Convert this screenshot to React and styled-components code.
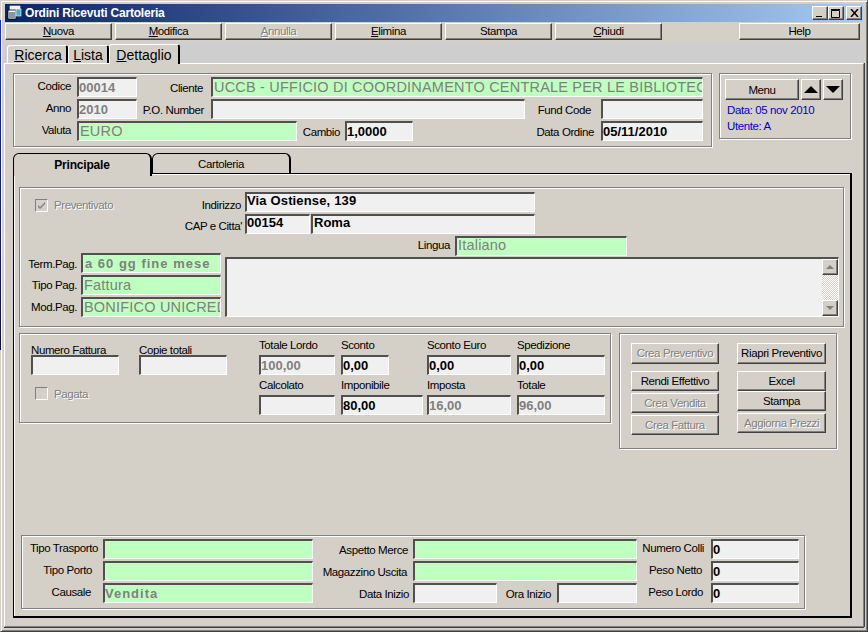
import React from 'react';
import styled, { createGlobalStyle, css } from 'styled-components';

const GlobalStyle = createGlobalStyle`
  html, body {
    margin: 0;
    padding: 0;
    background: #d4d0c8;
    overflow: hidden;
  }
  * { box-sizing: border-box; }
`;

const raised = css`
  border: 1px solid;
  border-color: #fff #404040 #404040 #fff;
  box-shadow: inset -1px -1px 0 #808080;
`;

const etched = css`
  border: 1px solid #808080;
  box-shadow: 1px 1px 0 #fff, inset 1px 1px 0 #fff;
`;

// Arial dei form originali e' piu' stretto, si recupera con la spaziatura
const uiText = css`
  font-family: "Liberation Sans", Arial, sans-serif;
  font-size: 11.5px;
  letter-spacing: -0.4px;
`;

const Window = styled.div`
  ${uiText};
  position: relative;
  width: 868px;
  height: 632px;
  padding: 4px;
  background: #d4d0c8;
  color: #000;
  border: 1px solid;
  border-color: #d4d0c8 #404040 #404040 #d4d0c8;
  box-shadow: inset 1px 1px 0 #fff, inset -1px -1px 0 #808080;
  display: flex;
  flex-direction: column;

  &::before {
    content: '';
    position: absolute;
    left: -1px;
    top: 19px;
    width: 1px;
    height: 330px;
    background: linear-gradient(180deg, #1a2fd0, #101040);
  }
`;

const TitleBar = styled.div`
  height: 18px;
  margin: -1px 0 0 0;
  padding: 0 1px 0 2px;
  display: flex;
  align-items: center;
  background: linear-gradient(90deg, #0a246a, #a6caf0);
  color: #fff;
  font: bold 12px "Liberation Sans", Arial, sans-serif;
  letter-spacing: -0.2px;
`;

const TitleText = styled.span`
  margin-left: 2px;
  flex: 1;
`;

const WinButton = styled.button`
  ${raised};
  width: 16px;
  height: 14px;
  margin-left: ${(p) => (p.$gap ? '2px' : '0')};
  padding: 0;
  background: #d4d0c8;
  display: flex;
  align-items: center;
  justify-content: center;
`;

const Toolbar = styled.div`
  display: flex;
  gap: 3px;
  height: 17px;
  margin-top: 1px;
`;

const BaseButton = styled.button`
  ${raised};
  ${uiText};
  background: #d4d0c8;
  padding: 0;
  white-space: nowrap;
  color: ${(p) => (p.disabled ? '#808080' : '#000')};
  text-shadow: ${(p) => (p.disabled ? '1px 1px 0 #fff' : 'none')};
`;

const ToolButton = styled(BaseButton)`
  width: ${(p) => p.$w || 107}px;
  height: 17px;
  line-height: 14px;
  padding-bottom: 2px;
  margin-left: ${(p) => p.$left || 0}px;
`;

const Key = styled.span`
  text-decoration: underline;
`;

const TabStrip = styled.div`
  height: 20px;
  margin: 3px -1px 0 -1px;
  padding-left: 3px;
  display: flex;
  align-items: flex-end;
  background: #cecece;
`;

const PageTab = styled.div`
  width: ${(p) => p.$w}px;
  height: ${(p) => (p.$active ? 20 : 18)}px;
  padding-top: ${(p) => (p.$active ? 2 : 1)}px;
  padding-left: ${(p) => p.$pl || 0}px;
  text-align: center;
  font-size: 14px;
  letter-spacing: 0;
  line-height: 16px;
  background: #d4d0c8;
  border-top: 1px solid #fff;
  border-left: 1px solid #fff;
  border-right: 2px solid #000;
  border-radius: 3px 3px 0 0;
  margin-bottom: ${(p) => (p.$active ? -1 : 0)}px;
  position: relative;
`;

const PagePanel = styled.div`
  flex: 1;
  margin: 0 -1px;
  border-top: 1px solid #fff;
  border-left: 1px solid #fff;
  border-right: 1px solid #808080;
  border-bottom: 1px solid #808080;
  box-shadow: 1px 0 0 #404040, 0 1px 0 #404040;
  padding: 9px 0 0 8px;
  display: flex;
  flex-direction: column;
`;

const TopRow = styled.div`
  display: flex;
  gap: 7px;
  align-items: flex-start;
`;

const Group = styled.div`
  ${etched};
  width: ${(p) => p.$w}px;
  height: ${(p) => p.$h}px;
  background: #d4d0c8;
  flex: none;
`;

const HeaderGroup = styled(Group)`
  padding: 3px 0 0 8px;
  display: grid;
  grid-template-columns: 55px 60px 74px 314px 76px 102px;
  grid-auto-rows: 20px;
  row-gap: 2px;
`;

const Label = styled.label`
  align-self: center;
  white-space: nowrap;
  flex: none;
  width: ${(p) => (p.$w ? `${p.$w}px` : 'auto')};
  padding-right: ${(p) => p.$pr ?? 0}px;
  text-align: right;
  margin-top: ${(p) => p.$top ?? 2}px;
  grid-column: ${(p) => p.$col || 'auto'};
`;

const Field = styled.div`
  height: 20px;
  width: ${(p) => (p.$w ? `${p.$w}px` : 'auto')};
  flex: none;
  padding: ${(p) => (p.$high || p.$big ? 0 : 1)}px 0 0 ${(p) => (p.$big ? 1 : p.$pad || 0)}px;
  margin-left: ${(p) => p.$ml || 0}px;
  border: 2px solid;
  border-color: #505050 #fff #fff #505050;
  border-right-width: 1px;
  border-bottom-width: 1px;
  overflow: hidden;
  white-space: nowrap;
  background: ${(p) => (p.$lookup ? '#bfffbf' : '#f0f0f0')};
  color: ${(p) => (p.$dim ? '#808080' : '#000')};
  font-family: "Liberation Sans", Arial, sans-serif;
  font-size: ${(p) => (p.$big ? 14.5 : 13)}px;
  font-weight: ${(p) => (p.$big ? 400 : 700)};
  line-height: ${(p) => (p.$high ? 14 : 16)}px;
  letter-spacing: ${(p) => (p.$big ? 0.2 : p.$track || 0)}px;
  grid-column: ${(p) => p.$col || 'auto'};
`;

const InlineRow = styled.div`
  display: flex;
  align-items: center;
  grid-column: ${(p) => p.$col || 'auto'};
`;

const MenuGroup = styled(Group)`
  padding: 5px 0 0 5px;
`;

const MenuButtons = styled.div`
  display: flex;
  gap: 2px;
`;

const MenuButton = styled(BaseButton)`
  width: ${(p) => p.$w}px;
  height: 21px;
  display: flex;
  align-items: center;
  justify-content: center;
`;

const Info = styled.div`
  color: #0000c8;
  line-height: 16px;
  margin-left: 2px;
  margin-top: ${(p) => p.$top || 0}px;
`;

const InnerTabs = styled.div`
  display: flex;
  margin-top: 6px;
  height: 21px;
  position: relative;
  z-index: 1;
`;

const InnerTab = styled.div`
  width: 139px;
  height: ${(p) => (p.$active ? 23 : 21)}px;
  background: #d4d0c8;
  border: 1px solid #000;
  border-right-width: 2px;
  border-bottom: ${(p) => (p.$active ? 'none' : '1px solid #000')};
  border-radius: 6px 6px 0 0;
  text-align: center;
  font-weight: ${(p) => (p.$active ? 700 : 400)};
  font-size: ${(p) => (p.$active ? 12 : 11.5)}px;
  letter-spacing: ${(p) => (p.$active ? -0.2 : -0.4)}px;
  line-height: ${(p) => (p.$active ? 22 : 20)}px;
`;

const InnerPanel = styled.div`
  width: 839px;
  height: 445px;
  margin-top: -1px;
  border: 1px solid #000;
  border-right-width: 2px;
  border-bottom-width: 2px;
  box-shadow: inset 1px 1px 0 #fff;
  padding: 13px 0 0 5px;
  display: flex;
  flex-direction: column;
`;

const AddressGroup = styled(Group)`
  padding: 4px 0 0 0;
  display: flex;
  flex-direction: column;
`;

const AddressRow = styled.div`
  display: flex;
  align-items: center;
  height: 20px;
  margin-bottom: 2px;
  padding-left: ${(p) => p.$left || 0}px;
`;

const CheckLabel = styled.div`
  display: flex;
  align-items: center;
  flex: none;
  gap: 6px;
  color: #808080;
  text-shadow: 1px 1px 0 #fff;
  width: ${(p) => (p.$w ? `${p.$w}px` : 'auto')};
  margin: ${(p) => p.$top || 0}px 0 0 ${(p) => p.$left || 0}px;
`;

const CheckBox = styled.span`
  width: 13px;
  height: 13px;
  flex: none;
  display: flex;
  border: 1px solid;
  border-color: #808080 #fff #fff #808080;
  background: #d4d0c8;
`;

const PayBlock = styled.div`
  display: flex;
  gap: 4px;
  margin-top: -5px;
`;

const PayColumn = styled.div`
  display: grid;
  grid-template-columns: 57px 140px;
  grid-auto-rows: 20px;
  row-gap: 2px;
  padding-left: 4px;
`;

const NotesBox = styled.div`
  width: 614px;
  height: 60px;
  margin-top: 4px;
  display: flex;
  justify-content: flex-end;
  background: #f0f0f0;
  border: 2px solid;
  border-color: #505050 #fff #fff #505050;
  border-right-width: 1px;
  border-bottom-width: 1px;
`;

const ScrollTrack = styled.div`
  width: 16px;
  display: flex;
  flex-direction: column;
  justify-content: space-between;
  background: repeating-conic-gradient(#fff 0 25%, #d4d0c8 0 50%) 0 0 / 2px 2px;
`;

const ScrollBtn = styled.div`
  ${raised};
  width: 16px;
  height: 16px;
  background: #d4d0c8;
  display: flex;
  align-items: center;
  justify-content: center;
`;

const MiddleRow = styled.div`
  display: flex;
  gap: 8px;
  margin-top: 6px;
  align-items: flex-start;
`;

const TotalsGroup = styled(Group)`
  display: flex;
`;

const InvoiceColumn = styled.div`
  width: ${(p) => p.$w}px;
  padding: 7px 0 0 ${(p) => p.$left || 0}px;
  display: flex;
  flex-direction: column;
`;

const Caption = styled.div`
  height: 14px;
  line-height: ${(p) => (p.$low ? 18 : 14)}px;
  white-space: nowrap;
`;

const TotalsGrid = styled.div`
  display: grid;
  grid-template-columns: 82px 86px 90px 88px;
  grid-template-rows: 14px 20px 14px 20px;
  margin-top: 4px;
  row-gap: 3px;
`;

const ActionsGroup = styled(Group)`
  padding: 9px 0 0 11px;
  display: flex;
  gap: 18px;
`;

const ActionColumn = styled.div`
  width: ${(p) => p.$w}px;
  display: flex;
  flex-direction: column;
`;

const ActionButton = styled(BaseButton)`
  width: 100%;
  height: ${(p) => p.$h || 20}px;
  padding-bottom: ${(p) => (p.$h ? 2 : 0)}px;
  margin-top: ${(p) => p.$top || 0}px;
  flex: none;
`;

const Spacer = styled.div`
  flex: 1;
`;

const ShippingGroup = styled(Group)`
  margin: 0 0 7px 2px;
  padding: 3px 0 0 0;
  display: grid;
  grid-template-columns: 81px 210px 100px 224px 74px 88px;
  grid-auto-rows: 20px;
  row-gap: 2px;
`;

const check = (
  <svg width="11" height="11" viewBox="0 0 11 11">
    <path d="M2 5l2 2 5-5v2l-5 5-2-2z" fill="#808080" />
  </svg>
);

const arrow = (up, size, color) => (
  <svg width={size * 2} height={size} viewBox="0 0 14 7">
    <path d={up ? 'M7 0l7 7H0z' : 'M0 0h14L7 7z'} fill={color} />
  </svg>
);

const AppIcon = () => (
  <svg width="16" height="16" viewBox="0 0 16 16">
    <rect x="3" y="1" width="10" height="4" fill="#e8f4f8" stroke="#fff" strokeWidth="0.6" />
    <rect x="1" y="5" width="8" height="9" fill="#fff" stroke="#000" strokeWidth="0.8" />
    <rect x="9" y="4" width="5" height="7" fill="#4ab0c8" stroke="#fff" strokeWidth="0.6" />
    <path d="M2 8h6M2 10h6M2 12h6" stroke="#0a3060" />
  </svg>
);

function Check({ checked, label, w, top, left }) {
  return (
    <CheckLabel $w={w} $top={top} $left={left}>
      <CheckBox>{checked && check}</CheckBox>
      {label}
    </CheckLabel>
  );
}

export default function App() {
  return (
    <>
      <GlobalStyle />
      <Window>
        <TitleBar>
          <AppIcon />
          <TitleText>Ordini Ricevuti Cartoleria</TitleText>
          <WinButton>
            <svg width="8" height="8" viewBox="0 0 8 8"><path d="M0 7h6v1H0z" fill="#000" /></svg>
          </WinButton>
          <WinButton>
            <svg width="10" height="9" viewBox="0 0 10 9"><path d="M.5 1.5h8v7h-8zM0 .5h9" fill="none" stroke="#000" /></svg>
          </WinButton>
          <WinButton $gap>
            <svg width="9" height="8" viewBox="0 0 9 8"><path d="M1 0l7 8M8 0L1 8" stroke="#000" strokeWidth="1.5" /></svg>
          </WinButton>
        </TitleBar>

        <Toolbar>
          <ToolButton><Key>N</Key>uova</ToolButton>
          <ToolButton><Key>M</Key>odifica</ToolButton>
          <ToolButton disabled><Key>A</Key>nnulla</ToolButton>
          <ToolButton><Key>E</Key>limina</ToolButton>
          <ToolButton>Stampa</ToolButton>
          <ToolButton><Key>C</Key>hiudi</ToolButton>
          <ToolButton $left={74} $w={121}>Help</ToolButton>
        </Toolbar>

        <TabStrip>
          <PageTab $w={61} $pl={2}><Key>R</Key>icerca</PageTab>
          <PageTab $w={41}><Key>L</Key>ista</PageTab>
          <PageTab $w={71} $active><Key>D</Key>ettaglio</PageTab>
        </TabStrip>

        <PagePanel>
          <TopRow>
            <HeaderGroup $w={699} $h={74}>
              <Label $pr={6} $top={-2}>Codice</Label>
              <Field $dim>00014</Field>
              <Label $pr={8}>Cliente</Label>
              <Field $lookup $big $dim $col="4 / 7">UCCB - UFFICIO DI COORDINAMENTO CENTRALE PER LE BIBLIOTEC</Field>

              <Label $pr={6} $top={-2}>Anno</Label>
              <Field $dim>2010</Field>
              <Label $pr={7}>P.O. Number</Label>
              <Field />
              <Label $pr={10}>Fund Code</Label>
              <Field />

              <Label $pr={6} $top={-2}>Valuta</Label>
              <InlineRow $col="2 / 5">
                <Field $lookup $big $dim $w={220}>EURO</Field>
                <Label $pr={5} $w={48}>Cambio</Label>
                <Field $w={68}>1,0000</Field>
              </InlineRow>
              <Label $pr={7} $col="5">Data Ordine</Label>
              <Field>05/11/2010</Field>
            </HeaderGroup>

            <MenuGroup $w={132} $h={66}>
              <MenuButtons>
                <MenuButton $w={74}>Menu</MenuButton>
                <MenuButton $w={20}>{arrow(true, 7, '#000')}</MenuButton>
                <MenuButton $w={20}>{arrow(false, 7, '#000')}</MenuButton>
              </MenuButtons>
              <Info $top={2}>Data: 05 nov 2010</Info>
              <Info>Utente: A</Info>
            </MenuGroup>
          </TopRow>

          <InnerTabs>
            <InnerTab $active>Principale</InnerTab>
            <InnerTab>Cartoleria</InnerTab>
          </InnerTabs>

          <InnerPanel>
            <AddressGroup $w={825} $h={140}>
              <AddressRow $left={15}>
                <Check checked label="Preventivato" w={150} top={6} />
                <Label $pr={4} $w={60} $top={6}>Indirizzo</Label>
                <Field $w={290} $track={0.15} $high>Via Ostiense, 139</Field>
              </AddressRow>
              <AddressRow>
                <Label $pr={3} $w={225} $top={4}>CAP e Citta'</Label>
                <Field $w={65} $high>00154</Field>
                <Field $w={224} $ml={1} $pad={1} $high>Roma</Field>
              </AddressRow>
              <AddressRow>
                <Label $pr={5} $w={435} $top={-2}>Lingua</Label>
                <Field $lookup $big $dim $w={172} $high>Italiano</Field>
              </AddressRow>
              <PayBlock>
                <PayColumn>
                  <Label $pr={4}>Term.Pag.</Label>
                  <Field $lookup $dim $pad={2} $track={1}>a 60 gg fine mese</Field>
                  <Label $pr={4} $top={0}>Tipo Pag.</Label>
                  <Field $lookup $big $dim>Fattura</Field>
                  <Label $pr={4} $top={0}>Mod.Pag.</Label>
                  <Field $lookup $big $dim>BONIFICO UNICREDIT</Field>
                </PayColumn>
                <NotesBox>
                  <ScrollTrack>
                    <ScrollBtn>{arrow(true, 4, '#808080')}</ScrollBtn>
                    <ScrollBtn>{arrow(false, 4, '#808080')}</ScrollBtn>
                  </ScrollTrack>
                </NotesBox>
              </PayBlock>
            </AddressGroup>

            <MiddleRow>
              <TotalsGroup $w={592} $h={90}>
                <InvoiceColumn $w={119} $left={11}>
                  <Caption $low>Numero Fattura</Caption>
                  <Field $w={88} />
                  <Check label="Pagata" top={12} left={4} />
                </InvoiceColumn>
                <InvoiceColumn $w={120}>
                  <Caption $low>Copie totali</Caption>
                  <Field $w={88} />
                </InvoiceColumn>
                <TotalsGrid>
                  <Caption>Totale Lordo</Caption>
                  <Caption>Sconto</Caption>
                  <Caption>Sconto Euro</Caption>
                  <Caption>Spedizione</Caption>
                  <Field $w={76} $dim>100,00</Field>
                  <Field $w={48}>0,00</Field>
                  <Field $w={84}>0,00</Field>
                  <Field $w={88}>0,00</Field>
                  <Caption>Calcolato</Caption>
                  <Caption>Imponibile</Caption>
                  <Caption>Imposta</Caption>
                  <Caption>Totale</Caption>
                  <Field $w={76} />
                  <Field $w={82}>80,00</Field>
                  <Field $w={84} $dim>16,00</Field>
                  <Field $w={88} $dim>96,00</Field>
                </TotalsGrid>
              </TotalsGroup>

              <ActionsGroup $w={218} $h={116}>
                <ActionColumn $w={88}>
                  <ActionButton disabled $h={21}>Crea Preventivo</ActionButton>
                  <ActionButton $top={7}>Rendi Effettivo</ActionButton>
                  <ActionButton disabled $top={2}>Crea Vendita</ActionButton>
                  <ActionButton disabled $top={2}>Crea Fattura</ActionButton>
                </ActionColumn>
                <ActionColumn $w={89}>
                  <ActionButton $h={21}>Riapri Preventivo</ActionButton>
                  <ActionButton $top={7}>Excel</ActionButton>
                  <ActionButton>Stampa</ActionButton>
                  <ActionButton disabled $top={2}>Aggiorna Prezzi</ActionButton>
                </ActionColumn>
              </ActionsGroup>
            </MiddleRow>

            <Spacer />

            <ShippingGroup $w={784} $h={74}>
              <Label $pr={5} $top={-2}>Tipo Trasporto</Label>
              <Field $lookup />
              <Label $pr={5}>Aspetto Merce</Label>
              <Field $lookup />
              <Label $pr={7} $top={-2}>Numero Colli</Label>
              <Field>0</Field>

              <Label $pr={11} $top={-2}>Tipo Porto</Label>
              <Field $lookup />
              <Label $pr={6}>Magazzino Uscita</Label>
              <Field $lookup />
              <Label $pr={9} $top={-2}>Peso Netto</Label>
              <Field>0</Field>

              <Label $pr={12} $top={-2}>Causale</Label>
              <Field $lookup $dim $track={1}>Vendita</Field>
              <Label $pr={4}>Data Inizio</Label>
              <InlineRow>
                <Field $w={84} />
                <Label $pr={6} $w={60}>Ora Inizio</Label>
                <Field $w={80} />
              </InlineRow>
              <Label $pr={8} $top={-2}>Peso Lordo</Label>
              <Field>0</Field>
            </ShippingGroup>
          </InnerPanel>
        </PagePanel>
      </Window>
    </>
  );
}
